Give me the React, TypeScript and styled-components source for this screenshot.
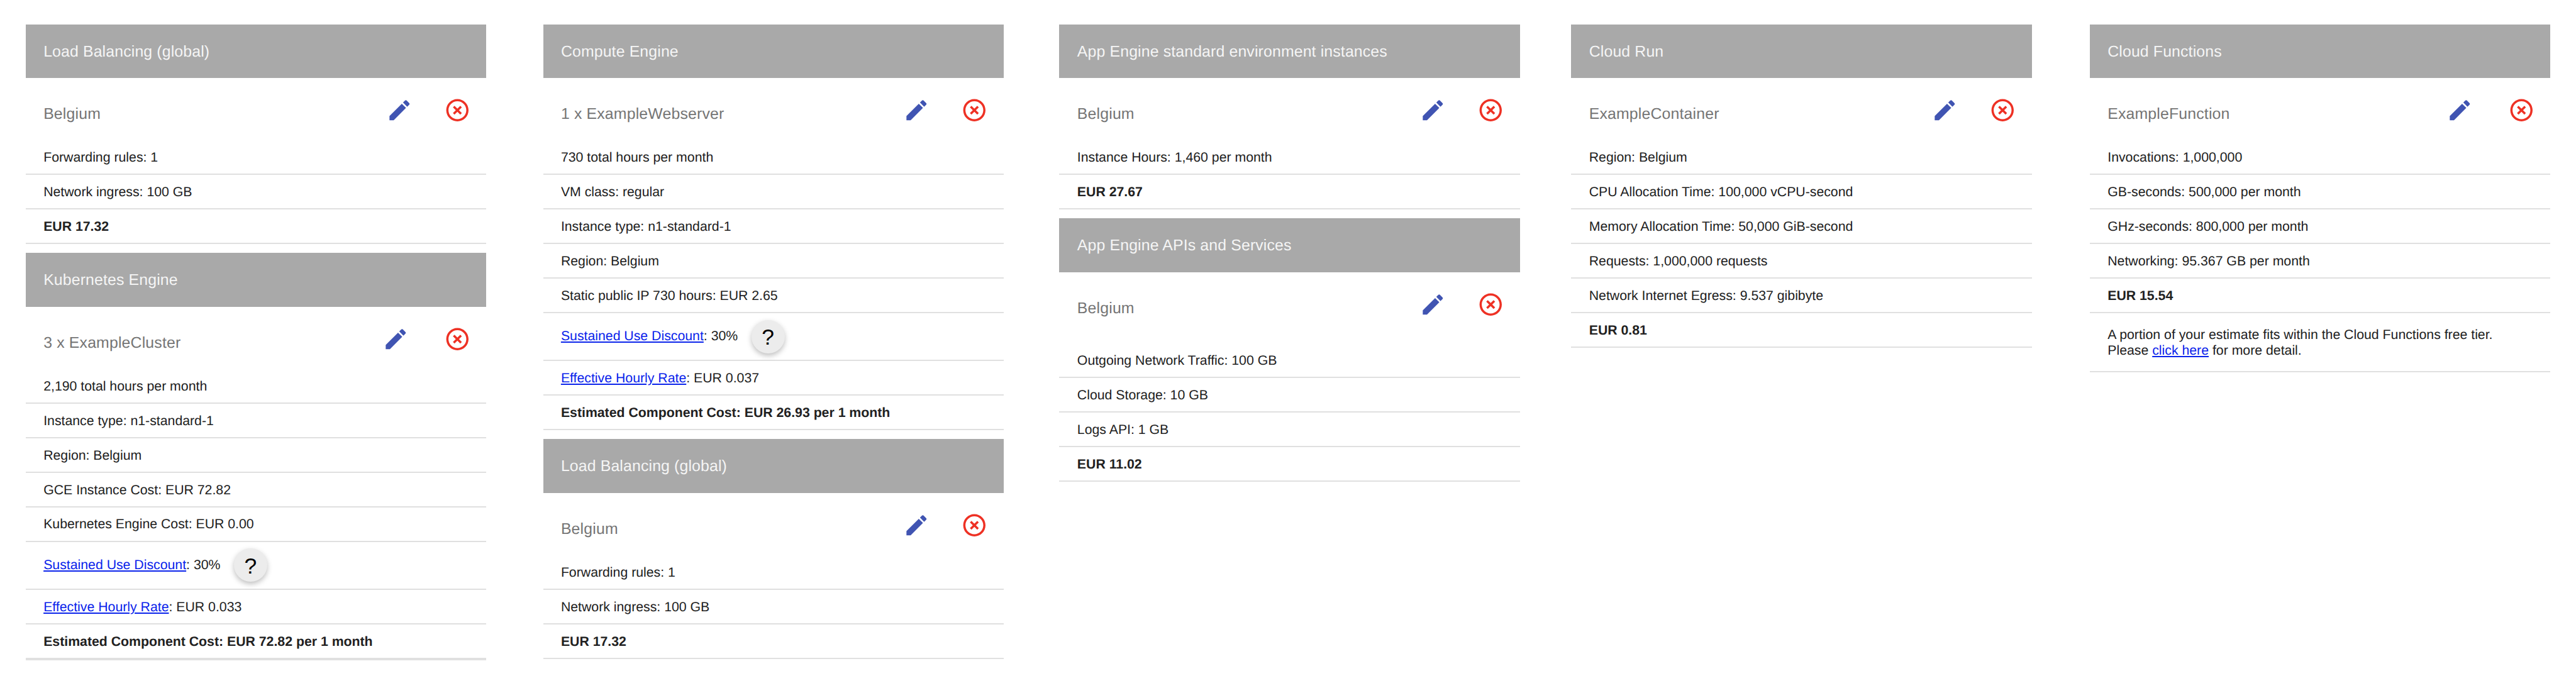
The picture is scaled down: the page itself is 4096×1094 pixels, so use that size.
import React from "react";
import styled, { createGlobalStyle } from "styled-components";

// Design units are laid out on a 4620-unit wide board shown at 4096px.
const u = (n: number) => `${Math.round(((n * 4096) / 4620) * 1000) / 1000}px`;

const GlobalStyle = createGlobalStyle`
  html, body { margin: 0; padding: 0; background: #fff; }
  body {
    font-family: "Liberation Sans", Arial, Helvetica, sans-serif;
    color: #212121;
    text-rendering: geometricPrecision;
  }
`;

const Board = styled.main`
  box-sizing: border-box;
  display: flex;
  align-items: flex-start;
  width: 4096px;
  height: 1094px;
  padding: ${u(44)} 0 0 ${u(46)};
  overflow: hidden;
  background: #fff;
`;

const Column = styled.div<{ $after: number }>`
  display: flex;
  flex: none;
  flex-direction: column;
  gap: ${u(16)};
  width: ${u(826)};
  margin-right: ${(p) => u(p.$after)};
`;

const Card = styled.section`
  display: flex;
  flex-direction: column;
`;

const CardHeader = styled.h2`
  box-sizing: border-box;
  height: ${u(96)};
  margin: 0;
  padding: 0 ${u(32)};
  background: #a9a9a9;
  color: #f5f5f5;
  font-size: ${u(28)};
  font-weight: 400;
  letter-spacing: 0.006em;
  line-height: ${u(99)};
`;

const ItemBar = styled.div`
  box-sizing: border-box;
  display: flex;
  justify-content: space-between;
  height: ${u(112)};
  padding: ${u(34)} ${u(28)} 0 ${u(32)};
`;

const ItemName = styled.h3`
  margin: ${u(15.7)} 0 0;
  color: #757575;
  font-size: ${u(28)};
  font-weight: 400;
  letter-spacing: 0.007em;
  line-height: ${u(32)};
`;

const Actions = styled.div<{ $wide?: boolean }>`
  display: flex;
  gap: ${(p) => u(p.$wide ? 62 : 56)};
`;

const IconButton = styled.button<{ $color: string }>`
  display: block;
  width: ${u(48)};
  height: ${u(48)};
  padding: 0;
  border: 0;
  background: none;
  color: ${(p) => p.$color};

  svg {
    display: block;
    width: 100%;
    height: 100%;
    fill: currentColor;
  }
`;

const Rows = styled.div<{ $offset?: boolean }>`
  display: flex;
  flex-direction: column;
  padding-top: ${(p) => u(p.$offset ? 16 : 0)};
`;

const Row = styled.div<{ $bold?: boolean; $height?: number; $line?: number }>`
  box-sizing: border-box;
  display: flex;
  align-items: center;
  height: ${(p) => u(p.$height ?? 62)};
  padding: 1.5px ${u(32)} 0;
  border-bottom: ${(p) => p.$line ?? 2}px solid #e0e0e0;
  font-size: ${u(24)};
  font-weight: ${(p) => (p.$bold ? 700 : 400)};
  line-height: ${u(28)};
  white-space: pre;
`;

const Link = styled.a`
  color: #0a23eb;
  text-decoration: underline;
`;

const HelpButton = styled.button`
  width: ${u(60)};
  height: ${u(60)};
  margin-top: -1.5px;
  margin-left: ${u(24)};
  padding: ${u(4)} 0 0;
  border: 0;
  border-radius: 50%;
  background: #ececec;
  box-shadow: 0 ${u(4)} ${u(10)} rgba(0, 0, 0, 0.26);
  color: #000;
  font-family: inherit;
  font-size: ${u(40)};
  line-height: ${u(56)};
`;

const DiscountText = styled.span`
  padding-bottom: ${u(3)};
`;

const Note = styled.div`
  display: flex;
  flex-direction: column;
`;

type Entry =
  | string
  | { kind: "total"; text: string; line?: number }
  | { kind: "link"; label: string; rest: string }
  | { kind: "discount" }
  | { kind: "note" };

type Item = {
  title: string;
  name: string;
  wide?: boolean;
  offset?: boolean;
  rows: Entry[];
};

const loadBalancing: Item = {
  title: "Load Balancing (global)",
  name: "Belgium",
  rows: ["Forwarding rules: 1", "Network ingress: 100 GB", { kind: "total", text: "EUR 17.32" }],
};

const columns: { after: number; items: Item[] }[] = [
  {
    after: 102,
    items: [
      loadBalancing,
      {
        title: "Kubernetes Engine",
        name: "3 x ExampleCluster",
        wide: true,
        rows: [
          "2,190 total hours per month",
          "Instance type: n1-standard-1",
          "Region: Belgium",
          "GCE Instance Cost: EUR 72.82",
          "Kubernetes Engine Cost: EUR 0.00",
          { kind: "discount" },
          { kind: "link", label: "Effective Hourly Rate", rest: ": EUR 0.033" },
          { kind: "total", text: "Estimated Component Cost: EUR 72.82 per 1 month", line: 4 },
        ],
      },
    ],
  },
  {
    after: 100,
    items: [
      {
        title: "Compute Engine",
        name: "1 x ExampleWebserver",
        rows: [
          "730 total hours per month",
          "VM class: regular",
          "Instance type: n1-standard-1",
          "Region: Belgium",
          "Static public IP 730 hours: EUR 2.65",
          { kind: "discount" },
          { kind: "link", label: "Effective Hourly Rate", rest: ": EUR 0.037" },
          { kind: "total", text: "Estimated Component Cost: EUR 26.93 per 1 month" },
        ],
      },
      loadBalancing,
    ],
  },
  {
    after: 92,
    items: [
      {
        title: "App Engine standard environment instances",
        name: "Belgium",
        rows: ["Instance Hours: 1,460 per month", { kind: "total", text: "EUR 27.67" }],
      },
      {
        title: "App Engine APIs and Services",
        name: "Belgium",
        offset: true,
        rows: [
          "Outgoing Network Traffic: 100 GB",
          "Cloud Storage: 10 GB",
          "Logs API: 1 GB",
          { kind: "total", text: "EUR 11.02" },
        ],
      },
    ],
  },
  {
    after: 104,
    items: [
      {
        title: "Cloud Run",
        name: "ExampleContainer",
        rows: [
          "Region: Belgium",
          "CPU Allocation Time: 100,000 vCPU-second",
          "Memory Allocation Time: 50,000 GiB-second",
          "Requests: 1,000,000 requests",
          "Network Internet Egress: 9.537 gibibyte",
          { kind: "total", text: "EUR 0.81" },
        ],
      },
    ],
  },
  {
    after: 0,
    items: [
      {
        title: "Cloud Functions",
        name: "ExampleFunction",
        wide: true,
        rows: [
          "Invocations: 1,000,000",
          "GB-seconds: 500,000 per month",
          "GHz-seconds: 800,000 per month",
          "Networking: 95.367 GB per month",
          { kind: "total", text: "EUR 15.54" },
          { kind: "note" },
        ],
      },
    ],
  },
];

const EditIcon = () => (
  <svg viewBox="0 0 24 24" aria-hidden="true">
    <path d="M3 17.25V21h3.75L17.81 9.94l-3.75-3.75L3 17.25zM20.71 7.04c.39-.39.39-1.02 0-1.41l-2.34-2.34c-.39-.39-1.02-.39-1.41 0l-1.83 1.83 3.75 3.75 1.83-1.83z" />
  </svg>
);

const RemoveIcon = () => (
  <svg viewBox="0 0 24 24" aria-hidden="true">
    <path d="M14.59 8L12 10.59 9.41 8 8 9.41 10.59 12 8 14.59 9.41 16 12 13.41 14.59 16 16 14.59 13.41 12 16 9.41 14.59 8zM12 2C6.47 2 2 6.47 2 12s4.47 10 10 10 10-4.47 10-10S17.53 2 12 2zm0 18c-4.41 0-8-3.59-8-8s3.59-8 8-8 8 3.59 8 8-3.59 8-8 8z" />
  </svg>
);

function EntryRow({ entry }: { entry: Entry }) {
  if (typeof entry === "string") return <Row>{entry}</Row>;
  switch (entry.kind) {
    case "total":
      return (
        <Row $bold $line={entry.line} $height={entry.line ? 64 : 62}>
          {entry.text}
        </Row>
      );
    case "link":
      return (
        <Row>
          <Link>{entry.label}</Link>
          {entry.rest}
        </Row>
      );
    case "discount":
      return (
        <Row $height={86}>
          <DiscountText>
            <Link>Sustained Use Discount</Link>: 30%
          </DiscountText>
          <HelpButton>?</HelpButton>
        </Row>
      );
    case "note":
      return (
        <Row $height={106}>
          <Note>
            <div>A portion of your estimate fits within the Cloud Functions free tier.</div>
            <div>
              Please <Link>click here</Link> for more detail.
            </div>
          </Note>
        </Row>
      );
  }
}

function ItemCard({ item }: { item: Item }) {
  return (
    <Card>
      <CardHeader>{item.title}</CardHeader>
      <ItemBar>
        <ItemName>{item.name}</ItemName>
        <Actions $wide={item.wide}>
          <IconButton $color="#4054b2" aria-label="Edit">
            <EditIcon />
          </IconButton>
          <IconButton $color="#ee3124" aria-label="Remove">
            <RemoveIcon />
          </IconButton>
        </Actions>
      </ItemBar>
      <Rows $offset={item.offset}>
        {item.rows.map((entry, i) => (
          <EntryRow key={i} entry={entry} />
        ))}
      </Rows>
    </Card>
  );
}

export default function App() {
  return (
    <>
      <GlobalStyle />
      <Board>
        {columns.map((column, i) => (
          <Column key={i} $after={column.after}>
            {column.items.map((item) => (
              <ItemCard key={item.title} item={item} />
            ))}
          </Column>
        ))}
      </Board>
    </>
  );
}
